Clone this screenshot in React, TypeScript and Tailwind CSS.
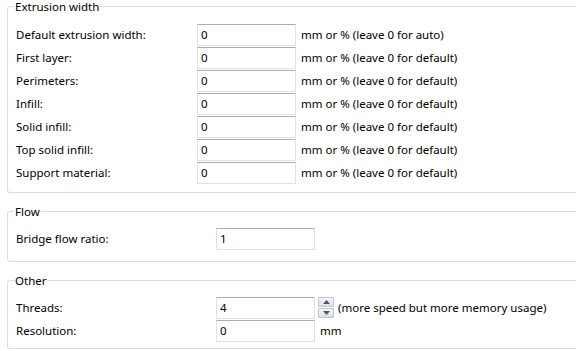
const font = { fontFamily: '"Segoe UI", "Noto Sans", "Open Sans", sans-serif' };

interface RowProps {
  label: string;
  value: string;
  unit?: string;
  inputX: string;
  spinner?: boolean;
}

function Spinner() {
  return (
    <div className="ml-[3px] flex h-[22px] w-[16px] flex-col gap-[1px]">
      <div className="flex h-[10px] items-center justify-center border border-[#bcc3cb] bg-gradient-to-b from-[#f4f5f7] to-[#dde1e6] rounded-[1px]">
        <svg width="7" height="4" viewBox="0 0 7 4">
          <path d="M0 4 L3.5 0 L7 4 Z" fill="#4d5566" />
        </svg>
      </div>
      <div className="flex h-[10px] items-center justify-center border border-[#bcc3cb] bg-gradient-to-b from-[#f4f5f7] to-[#dde1e6] rounded-[1px]">
        <svg width="7" height="4" viewBox="0 0 7 4">
          <path d="M0 0 L3.5 4 L7 0 Z" fill="#4d5566" />
        </svg>
      </div>
    </div>
  );
}

function Row({ label, value, unit, inputX, spinner }: RowProps) {
  return (
    <div className="flex h-[22px] items-center">
      <span className={`${inputX} shrink-0 pl-[8px] text-[11.5px] text-black`}>{label}</span>
      <div className="flex h-[22px] w-[99px] items-center border border-[#dde2e8] border-t-[#abadb3] bg-white pl-[3px] text-[11.5px] text-black">
        {value}
      </div>
      {spinner && <Spinner />}
      {unit && <span className={`${spinner ? 'ml-[4px]' : 'ml-[5px]'} text-[11.5px] text-black`}>{unit}</span>}
    </div>
  );
}

function Group({ title, children, className }: { title: string; children: React.ReactNode; className?: string }) {
  return (
    <fieldset className={`ml-[7px] w-[620px] rounded-[3px] border border-[#d5dfe5] ${className ?? ''}`}>
      <legend className="ml-[6px] px-[1px] text-[11.5px] leading-[13px] text-black">{title}</legend>
      {children}
    </fieldset>
  );
}

export default function App() {
  const extrusion = [
    ['Default extrusion width:', 'mm or % (leave 0 for auto)'],
    ['First layer:', 'mm or % (leave 0 for default)'],
    ['Perimeters:', 'mm or % (leave 0 for default)'],
    ['Infill:', 'mm or % (leave 0 for default)'],
    ['Solid infill:', 'mm or % (leave 0 for default)'],
    ['Top solid infill:', 'mm or % (leave 0 for default)'],
    ['Support material:', 'mm or % (leave 0 for default)'],
  ];

  return (
    <div className="h-[351px] w-[576px] overflow-hidden bg-white" style={font}>
      <Group title="Extrusion width" className="pb-[8px]">
        <div className="mt-[11px] flex flex-col gap-[1px]">
          {extrusion.map(([label, unit]) => (
            <Row key={label} label={label} value="0" unit={unit} inputX="w-[189px]" />
          ))}
        </div>
      </Group>

      <Group title="Flow" className="mt-[12px] pb-[11px]">
        <div className="mt-[10px]">
          <Row label="Bridge flow ratio:" value="1" inputX="w-[208px]" />
        </div>
      </Group>

      <Group title="Other" className="mt-[12px] pb-[6px]">
        <div className="mt-[10px] flex flex-col gap-[1px]">
          <Row label="Threads:" value="4" unit="(more speed but more memory usage)" inputX="w-[208px]" spinner />
          <Row label="Resolution:" value="0" unit="mm" inputX="w-[208px]" />
        </div>
      </Group>
    </div>
  );
}
